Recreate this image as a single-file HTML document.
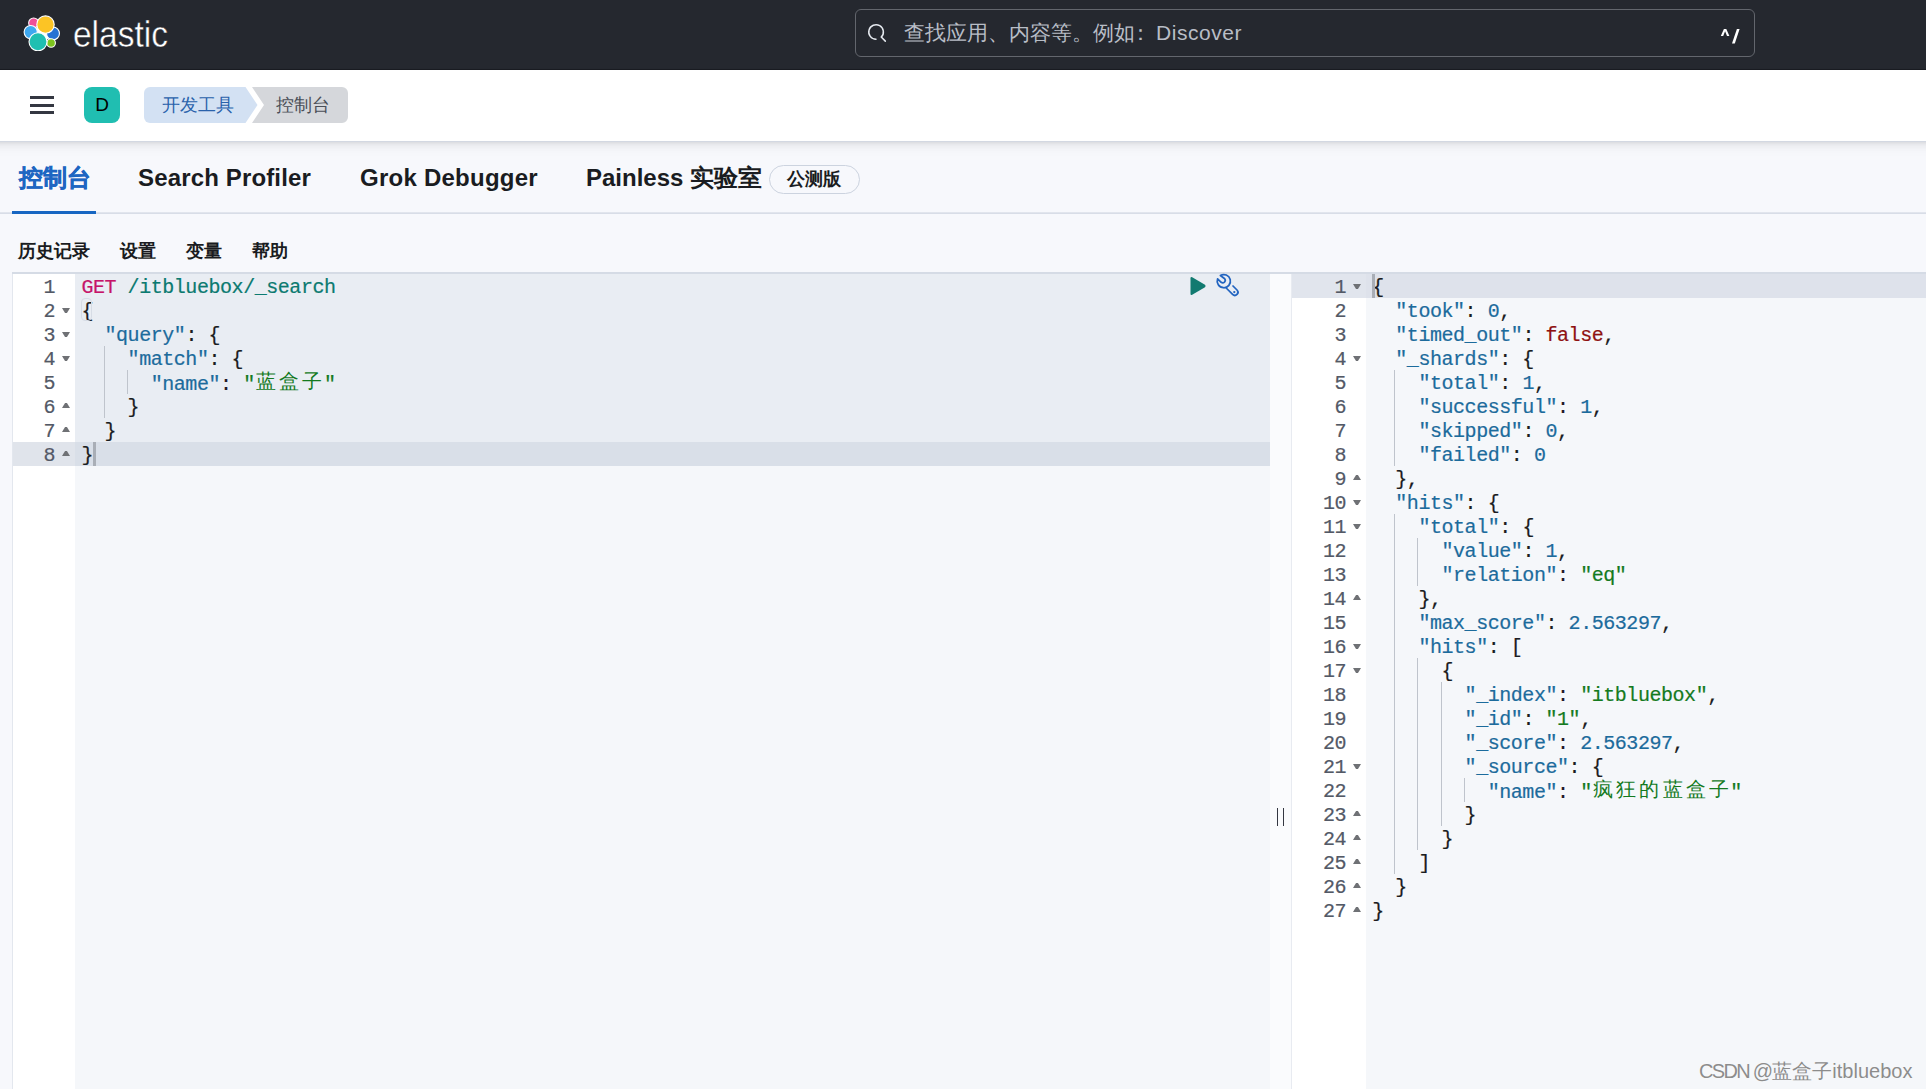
<!DOCTYPE html>
<html><head><meta charset="utf-8"><title>Console - Dev Tools</title><style>
*{margin:0;padding:0;box-sizing:border-box}
html,body{width:1926px;height:1089px;overflow:hidden;background:#f7f8fc;font-family:"Liberation Sans",sans-serif;position:relative}
.a{position:absolute}
#hdr{left:0;top:0;width:1926px;height:70px;background:#25282f;border-bottom:1px solid #1b1d23}
.logo{position:absolute;left:23px;top:14px}
#wm{position:absolute;left:73px;top:14px;color:#fff;font-size:37px;white-space:nowrap;transform-origin:0 0;transform:scaleX(0.905);-webkit-text-stroke:0.45px #25282f}
#search{left:855px;top:9px;width:900px;height:48px;border:1.8px solid #63666d;border-radius:6px;background:#25282f}
#stext{left:904px;top:19px;font-size:21px;color:#b8bdc6;white-space:nowrap}
#skey{left:1721px;top:25px;font-size:20px;color:#fff;font-weight:bold;white-space:nowrap}
#hdr2{left:-60px;top:70px;width:2046px;height:72px;background:#fff;border-bottom:1px solid #d3d8e2;box-shadow:0 1.3px 5px -1.5px rgba(0,0,0,.10),0 3.5px 9px -1.5px rgba(0,0,0,.06),0 7px 13px -1.5px rgba(0,0,0,.04)}
.bar{position:absolute;left:30px;width:24px;height:3px;background:#343741}
#avatar{left:84px;top:87px;width:36px;height:36px;border-radius:8px;background:#20beb1;color:#000;font-size:19px;text-align:center;line-height:36px}
.crumb{position:absolute;top:87px;height:36px;font-size:18px;line-height:36px;white-space:nowrap}
#tabs .t{position:absolute;top:163px;font-size:24px;font-weight:bold;color:#1a1c21;white-space:nowrap;line-height:30px}
#tabline{left:0;top:212px;width:1926px;height:2px;background:linear-gradient(#e6e9f0,#d3d9e4)}
#tabsel{left:12px;top:211px;width:84px;height:3px;background:#1766c2}
#badge{left:768.5px;top:164.5px;width:91px;height:29px;border:1.5px solid #ccd3df;border-radius:15px;font-size:18px;font-weight:bold;color:#1a1c21;text-align:center;line-height:26px}
.tb{position:absolute;top:238.5px;font-size:18px;font-weight:bold;color:#1a1c21;white-space:nowrap}
#edl{left:12px;top:274px;width:1258px;height:815px;border-left:1px solid #e3e7ee;background:#f5f7fa}
#edtop{left:12px;top:272px;width:1914px;height:2px;background:#d5dbe5}
#gl{left:13px;top:274px;width:62px;height:815px;background:#fff}
#er{left:1291px;top:274px;width:635px;height:815px;border-left:1px solid #e8ebf1;background:#f5f7fa}
#gr{left:1292px;top:274px;width:74px;height:815px;background:#fff}
#mid{left:1270px;top:274px;width:21px;height:815px;background:#fafbfd}
.ln{position:absolute;height:24px;line-height:24px;font-family:"Liberation Mono",monospace;font-size:20px;letter-spacing:-0.45px;white-space:pre;color:#1a1c21}
.ln>span{position:relative;top:1.5px}
.ln i.cj{position:relative;top:-2px}
.ln>span>i.cj{top:-2px}
.gn{position:absolute;height:24px;line-height:24px;font-family:"Liberation Mono",monospace;font-size:20px;letter-spacing:-0.45px;color:#535966;text-align:right}
.gn{padding-top:1.5px}
.ln,.gn{-webkit-text-stroke:0.2px currentColor}
.ln i.cj{-webkit-text-stroke:0}
.cj{display:inline-block;width:23.1px;text-align:center;font-style:normal;font-family:"Liberation Serif",serif;font-size:19.5px;letter-spacing:0}
.k{color:#1c6b9c}.s{color:#147a1e}.n{color:#1c6b9c}.b{color:#8f1111}.m{color:#c61469}.u{color:#0b7a70}.p{color:#1a1c21}
.fw{position:absolute;width:8px;height:5px;background:#6f7175}
.fw.d{clip-path:polygon(0 0,100% 0,62% 100%,38% 100%)}
.fw.u{clip-path:polygon(38% 0,62% 0,100% 100%,0 100%)}
.ig{position:absolute;width:1px;background:#bfc4cc}
#hlreq{left:75px;top:274px;width:1195px;height:168px;background:#e9edf3}
#actl{left:75px;top:442px;width:1195px;height:24px;background:#d9dfe8}
#actlg{left:13px;top:442px;width:62px;height:24px;background:#e0e4eb}
#actr{left:1366px;top:274px;width:560px;height:24px;background:#dee2eb}
#actrg{left:1292px;top:274px;width:74px;height:24px;background:#e1e5ed}
.cur{position:absolute;width:2.5px;height:24px;background:#a9aeb6}
#wmk{left:1699px;top:1058px;font-size:20px;color:#8c8c8c;white-space:nowrap;text-shadow:0 0 1px #fff}
#resz{left:1277px;top:808px;width:7px;height:18px;border-left:1.5px solid #343741;border-right:1.5px solid #343741}
</style></head><body>
<div id="hdr" class="a"><svg class="logo" width="37" height="37" viewBox="0 0 37 37">
<circle cx="19.5" cy="19" r="8" fill="#fff"/><g stroke="#fff" stroke-width="1.1">
<circle cx="10.65" cy="8.95" r="5" fill="#f04e98"/>
<circle cx="7.7" cy="18.1" r="6.6" fill="#3ea8f0"/>
<circle cx="30" cy="19.45" r="6.45" fill="#2672d3"/>
<circle cx="28.1" cy="29" r="4.3" fill="#7dc41e"/>
<circle cx="22.5" cy="10.6" r="8.7" fill="#fcc425"/>
<circle cx="15" cy="27.8" r="9.0" fill="#1fbfb1"/>
</g></svg><div id="wm">elastic</div></div>
<div id="search" class="a"></div>
<svg class="a" style="left:860px;top:18px" width="35" height="30" viewBox="860 18 35 30"><path d="M876 39.3 A7.3 7.3 0 1 1 881.3 37.1 L885.3 41.1" stroke="#e6eaf0" stroke-width="1.5" fill="none" stroke-linecap="round" stroke-linejoin="miter"/></svg>
<div id="stext" class="a">查找应用、内容等。例如<span style="display:inline-block;width:21px;text-indent:-5px">：</span><span style="letter-spacing:0.55px">Discover</span></div>
<svg class="a" style="left:1712px;top:22px" width="36" height="28" viewBox="1712 22 36 28"><polygon fill="#fff" points="1720.8,36 1723.9,28.9 1726.3,28.9 1729.4,36 1727,36 1725.1,31.3 1723.2,36"/><polygon fill="#fff" points="1732,43.6 1736.9,28.9 1739.6,28.9 1734.8,43.6"/></svg>
<div id="hdr2" class="a"></div>
<div class="bar" style="top:96px"></div><div class="bar" style="top:103.5px"></div><div class="bar" style="top:111px"></div>
<div id="avatar" class="a">D</div>
<svg class="a" style="left:143px;top:87px" width="206" height="36" viewBox="0 0 206 36">
<path d="M7 0 H102.5 L114.5 18 L102.5 36 H7 A6 6 0 0 1 1 30 V6 A6 6 0 0 1 7 0Z" fill="#d3e1f3"/>
<path d="M109 0 H199 A6 6 0 0 1 205 6 V30 A6 6 0 0 1 199 36 H109 L121 18Z" fill="#d5d7db"/>
</svg>
<div class="crumb" style="left:162px;color:#2a62ab">开发工具</div>
<div class="crumb" style="left:276px;color:#4a4e57">控制台</div>
<div id="tabs"><div class="t" style="left:19px;color:#1e66c2;-webkit-text-stroke:0.4px #1e66c2">控制台</div><div class="t" style="left:138px;letter-spacing:0.15px">Search Profiler</div><div class="t" style="left:360px;letter-spacing:0.25px">Grok Debugger</div><div class="t" style="left:586px">Painless 实验室</div></div>
<div id="badge" class="a">公测版</div>
<div id="tabline" class="a"></div><div id="tabsel" class="a"></div>
<div class="tb" style="left:18px">历史记录</div><div class="tb" style="left:120px">设置</div><div class="tb" style="left:186px">变量</div><div class="tb" style="left:252px">帮助</div>
<div id="edl" class="a"></div><div id="edtop" class="a"></div><div id="gl" class="a"></div>
<div id="hlreq" class="a"></div><div id="actl" class="a"></div><div id="actlg" class="a"></div>
<div id="mid" class="a"></div>
<div id="er" class="a"></div><div id="gr" class="a"></div><div id="actr" class="a"></div><div id="actrg" class="a"></div>
<div id="resz" class="a"></div>
<div class="ln" style="top:274px;left:81.4px"><span class="m">GET</span><span class="p"> </span><span class="u">/itbluebox/_search</span></div>
<div class="gn" style="top:274px;left:13px;width:42px">1</div>
<div class="ln" style="top:298px;left:81.4px"><span class="p">{</span></div>
<div class="gn" style="top:298px;left:13px;width:42px">2</div>
<div class="fw d" style="top:308px;left:62.0px"></div>
<div class="ln" style="top:322px;left:81.4px"><span class="p">  </span><span class="k">"query"</span><span class="p">: {</span></div>
<div class="gn" style="top:322px;left:13px;width:42px">3</div>
<div class="fw d" style="top:332px;left:62.0px"></div>
<div class="ln" style="top:346px;left:81.4px"><span class="p">    </span><span class="k">"match"</span><span class="p">: {</span></div>
<div class="gn" style="top:346px;left:13px;width:42px">4</div>
<div class="fw d" style="top:356px;left:62.0px"></div>
<div class="ln" style="top:370px;left:81.4px"><span class="p">      </span><span class="k">"name"</span><span class="p">: </span><span class="s">"<i class="cj">蓝</i><i class="cj">盒</i><i class="cj">子</i>"</span></div>
<div class="gn" style="top:370px;left:13px;width:42px">5</div>
<div class="ln" style="top:394px;left:81.4px"><span class="p">    }</span></div>
<div class="gn" style="top:394px;left:13px;width:42px">6</div>
<div class="fw u" style="top:403px;left:62.0px"></div>
<div class="ln" style="top:418px;left:81.4px"><span class="p">  }</span></div>
<div class="gn" style="top:418px;left:13px;width:42px">7</div>
<div class="fw u" style="top:427px;left:62.0px"></div>
<div class="ln" style="top:442px;left:81.4px"><span class="p">}</span></div>
<div class="gn" style="top:442px;left:13px;width:42px">8</div>
<div class="fw u" style="top:451px;left:62.0px"></div>
<div class="ig" style="left:103.5px;top:346px;height:72px"></div>
<div class="ig" style="left:126.6px;top:370px;height:24px"></div>
<div class="ln" style="top:274px;left:1372.2px"><span class="p">{</span></div>
<div class="gn" style="top:274px;left:1293px;width:53px">1</div>
<div class="fw d" style="top:284px;left:1353.0px"></div>
<div class="ln" style="top:298px;left:1372.2px"><span class="p">  </span><span class="k">"took"</span><span class="p">: </span><span class="n">0</span><span class="p">,</span></div>
<div class="gn" style="top:298px;left:1293px;width:53px">2</div>
<div class="ln" style="top:322px;left:1372.2px"><span class="p">  </span><span class="k">"timed_out"</span><span class="p">: </span><span class="b">false</span><span class="p">,</span></div>
<div class="gn" style="top:322px;left:1293px;width:53px">3</div>
<div class="ln" style="top:346px;left:1372.2px"><span class="p">  </span><span class="k">"_shards"</span><span class="p">: {</span></div>
<div class="gn" style="top:346px;left:1293px;width:53px">4</div>
<div class="fw d" style="top:356px;left:1353.0px"></div>
<div class="ln" style="top:370px;left:1372.2px"><span class="p">    </span><span class="k">"total"</span><span class="p">: </span><span class="n">1</span><span class="p">,</span></div>
<div class="gn" style="top:370px;left:1293px;width:53px">5</div>
<div class="ln" style="top:394px;left:1372.2px"><span class="p">    </span><span class="k">"successful"</span><span class="p">: </span><span class="n">1</span><span class="p">,</span></div>
<div class="gn" style="top:394px;left:1293px;width:53px">6</div>
<div class="ln" style="top:418px;left:1372.2px"><span class="p">    </span><span class="k">"skipped"</span><span class="p">: </span><span class="n">0</span><span class="p">,</span></div>
<div class="gn" style="top:418px;left:1293px;width:53px">7</div>
<div class="ln" style="top:442px;left:1372.2px"><span class="p">    </span><span class="k">"failed"</span><span class="p">: </span><span class="n">0</span></div>
<div class="gn" style="top:442px;left:1293px;width:53px">8</div>
<div class="ln" style="top:466px;left:1372.2px"><span class="p">  },</span></div>
<div class="gn" style="top:466px;left:1293px;width:53px">9</div>
<div class="fw u" style="top:475px;left:1353.0px"></div>
<div class="ln" style="top:490px;left:1372.2px"><span class="p">  </span><span class="k">"hits"</span><span class="p">: {</span></div>
<div class="gn" style="top:490px;left:1293px;width:53px">10</div>
<div class="fw d" style="top:500px;left:1353.0px"></div>
<div class="ln" style="top:514px;left:1372.2px"><span class="p">    </span><span class="k">"total"</span><span class="p">: {</span></div>
<div class="gn" style="top:514px;left:1293px;width:53px">11</div>
<div class="fw d" style="top:524px;left:1353.0px"></div>
<div class="ln" style="top:538px;left:1372.2px"><span class="p">      </span><span class="k">"value"</span><span class="p">: </span><span class="n">1</span><span class="p">,</span></div>
<div class="gn" style="top:538px;left:1293px;width:53px">12</div>
<div class="ln" style="top:562px;left:1372.2px"><span class="p">      </span><span class="k">"relation"</span><span class="p">: </span><span class="s">"eq"</span></div>
<div class="gn" style="top:562px;left:1293px;width:53px">13</div>
<div class="ln" style="top:586px;left:1372.2px"><span class="p">    },</span></div>
<div class="gn" style="top:586px;left:1293px;width:53px">14</div>
<div class="fw u" style="top:595px;left:1353.0px"></div>
<div class="ln" style="top:610px;left:1372.2px"><span class="p">    </span><span class="k">"max_score"</span><span class="p">: </span><span class="n">2.563297</span><span class="p">,</span></div>
<div class="gn" style="top:610px;left:1293px;width:53px">15</div>
<div class="ln" style="top:634px;left:1372.2px"><span class="p">    </span><span class="k">"hits"</span><span class="p">: [</span></div>
<div class="gn" style="top:634px;left:1293px;width:53px">16</div>
<div class="fw d" style="top:644px;left:1353.0px"></div>
<div class="ln" style="top:658px;left:1372.2px"><span class="p">      {</span></div>
<div class="gn" style="top:658px;left:1293px;width:53px">17</div>
<div class="fw d" style="top:668px;left:1353.0px"></div>
<div class="ln" style="top:682px;left:1372.2px"><span class="p">        </span><span class="k">"_index"</span><span class="p">: </span><span class="s">"itbluebox"</span><span class="p">,</span></div>
<div class="gn" style="top:682px;left:1293px;width:53px">18</div>
<div class="ln" style="top:706px;left:1372.2px"><span class="p">        </span><span class="k">"_id"</span><span class="p">: </span><span class="s">"1"</span><span class="p">,</span></div>
<div class="gn" style="top:706px;left:1293px;width:53px">19</div>
<div class="ln" style="top:730px;left:1372.2px"><span class="p">        </span><span class="k">"_score"</span><span class="p">: </span><span class="n">2.563297</span><span class="p">,</span></div>
<div class="gn" style="top:730px;left:1293px;width:53px">20</div>
<div class="ln" style="top:754px;left:1372.2px"><span class="p">        </span><span class="k">"_source"</span><span class="p">: {</span></div>
<div class="gn" style="top:754px;left:1293px;width:53px">21</div>
<div class="fw d" style="top:764px;left:1353.0px"></div>
<div class="ln" style="top:778px;left:1372.2px"><span class="p">          </span><span class="k">"name"</span><span class="p">: </span><span class="s">"<i class="cj">疯</i><i class="cj">狂</i><i class="cj">的</i><i class="cj">蓝</i><i class="cj">盒</i><i class="cj">子</i>"</span></div>
<div class="gn" style="top:778px;left:1293px;width:53px">22</div>
<div class="ln" style="top:802px;left:1372.2px"><span class="p">        }</span></div>
<div class="gn" style="top:802px;left:1293px;width:53px">23</div>
<div class="fw u" style="top:811px;left:1353.0px"></div>
<div class="ln" style="top:826px;left:1372.2px"><span class="p">      }</span></div>
<div class="gn" style="top:826px;left:1293px;width:53px">24</div>
<div class="fw u" style="top:835px;left:1353.0px"></div>
<div class="ln" style="top:850px;left:1372.2px"><span class="p">    ]</span></div>
<div class="gn" style="top:850px;left:1293px;width:53px">25</div>
<div class="fw u" style="top:859px;left:1353.0px"></div>
<div class="ln" style="top:874px;left:1372.2px"><span class="p">  }</span></div>
<div class="gn" style="top:874px;left:1293px;width:53px">26</div>
<div class="fw u" style="top:883px;left:1353.0px"></div>
<div class="ln" style="top:898px;left:1372.2px"><span class="p">}</span></div>
<div class="gn" style="top:898px;left:1293px;width:53px">27</div>
<div class="fw u" style="top:907px;left:1353.0px"></div>
<div class="ig" style="left:1394.3px;top:370px;height:96px"></div>
<div class="ig" style="left:1394.3px;top:514px;height:360px"></div>
<div class="ig" style="left:1417.4px;top:538px;height:48px"></div>
<div class="ig" style="left:1417.4px;top:658px;height:192px"></div>
<div class="ig" style="left:1440.5px;top:682px;height:144px"></div>
<div class="ig" style="left:1463.6px;top:778px;height:24px"></div>
<div class="cur" style="left:93px;top:442px"></div>
<div class="a" style="left:80.5px;top:297.5px;width:11px;height:23px;border:1px solid #d6dce5;border-radius:4px"></div>
<div class="cur" style="left:1372px;top:274px"></div>
<svg class="a" style="left:1189px;top:276px" width="18" height="20" viewBox="0 0 18 20"><path d="M3.2 1.2 Q1.5 0.3 1.5 2.3 V17.7 Q1.5 19.7 3.2 18.8 L16 11.2 Q17.3 10 16 8.8Z" fill="#117a70"/></svg>
<svg class="a" style="left:1210px;top:270px" width="35" height="32" viewBox="1210 270 35 32"><g fill="none" stroke="#2264c0" stroke-width="1.75" stroke-linecap="round" stroke-linejoin="round"><path d="M1220.4 275.5 A6.6 6.6 0 1 1 1217.6 278.9 L1221.2 282.3 A2.5 2.5 0 0 0 1224.7 278.8 Z"/><path d="M1226.2 288 L1232.6 294.4 A3.1 3.1 0 0 0 1237.0 290.0 L1233.0 286.0"/></g><circle cx="1234.3" cy="292.1" r="1.15" fill="#1f63c0"/></svg>
<div id="wmk" class="a"><span style="letter-spacing:-1.7px">CSDN @</span><span style="margin-left:1px">蓝盒子itbluebox</span></div>
</body></html>
